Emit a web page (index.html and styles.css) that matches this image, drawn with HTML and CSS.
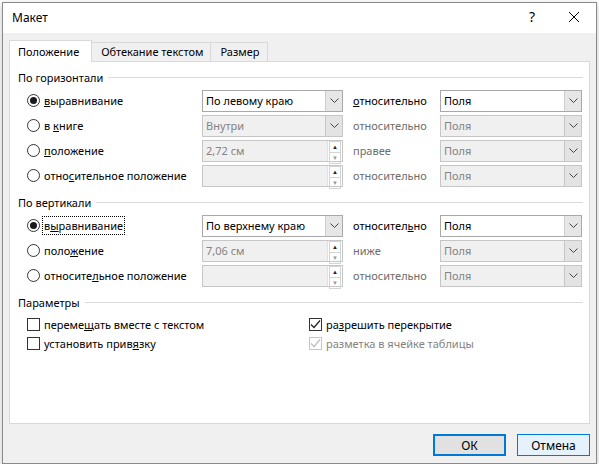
FILE: index.html
```html
<!DOCTYPE html>
<html lang="ru">
<head>
    <meta charset="UTF-8">
    <title>Макет</title>
    <link rel="stylesheet" href="styles.css">
</head>
<body>
    <div class="dialog">
        <div class="titlebar">
            <span class="title">Макет</span>
            <span class="help">?</span>
            <span class="close">
                <svg width="12" height="12" viewBox="0 0 12 12"><path d="M1 1 L11 11 M11 1 L1 11" stroke="#000" stroke-width="1" fill="none"/></svg>
            </span>
        </div>
        <div class="content">
            <div class="tabs">
                <div class="tab active">Положение</div>
                <div class="tab">Обтекание текстом</div>
                <div class="tab">Размер</div>
            </div>
            <div class="panel">
                <!-- По горизонтали -->
                <div class="group-title"><span>По горизонтали</span></div>
                <div class="rows">
                    <div class="row">
                        <label class="radio checked"><span class="circle"></span><span><u>в</u>ыравнивание</span></label>
                        <div class="combo"><span class="value">По левому краю</span><span class="arrow"><svg width="9" height="5" viewBox="0 0 9 5"><path d="M0.5 0.5 L4.5 4.5 L8.5 0.5" stroke="#444" fill="none"/></svg></span></div>
                        <span class="rel"><u>о</u>тносительно</span>
                        <div class="combo"><span class="value">Поля</span><span class="arrow"><svg width="9" height="5" viewBox="0 0 9 5"><path d="M0.5 0.5 L4.5 4.5 L8.5 0.5" stroke="#444" fill="none"/></svg></span></div>
                    </div>
                    <div class="row">
                        <label class="radio"><span class="circle"></span><span>в <u>к</u>ниге</span></label>
                        <div class="combo disabled"><span class="value">Внутри</span><span class="arrow"><svg width="9" height="5" viewBox="0 0 9 5"><path d="M0.5 0.5 L4.5 4.5 L8.5 0.5" stroke="#444" fill="none"/></svg></span></div>
                        <span class="rel disabled">относительно</span>
                        <div class="combo disabled"><span class="value">Поля</span><span class="arrow"><svg width="9" height="5" viewBox="0 0 9 5"><path d="M0.5 0.5 L4.5 4.5 L8.5 0.5" stroke="#444" fill="none"/></svg></span></div>
                    </div>
                    <div class="row">
                        <label class="radio"><span class="circle"></span><span><u>п</u>оложение</span></label>
                        <div class="spin"><span class="value">2,72 см</span><span class="spin-btns"><span class="up">&#9650;</span><span class="down">&#9660;</span></span></div>
                        <span class="rel disabled">правее</span>
                        <div class="combo disabled"><span class="value">Поля</span><span class="arrow"><svg width="9" height="5" viewBox="0 0 9 5"><path d="M0.5 0.5 L4.5 4.5 L8.5 0.5" stroke="#444" fill="none"/></svg></span></div>
                    </div>
                    <div class="row">
                        <label class="radio"><span class="circle"></span><span>отно<u>с</u>ительное положение</span></label>
                        <div class="spin"><span class="value"></span><span class="spin-btns"><span class="up">&#9650;</span><span class="down">&#9660;</span></span></div>
                        <span class="rel disabled">относительно</span>
                        <div class="combo disabled"><span class="value">Поля</span><span class="arrow"><svg width="9" height="5" viewBox="0 0 9 5"><path d="M0.5 0.5 L4.5 4.5 L8.5 0.5" stroke="#444" fill="none"/></svg></span></div>
                    </div>
                </div>

                <!-- По вертикали -->
                <div class="group-title"><span>По вертикали</span></div>
                <div class="rows">
                    <div class="row">
                        <label class="radio checked"><span class="circle"></span><span class="focus">в<u>ы</u>равнивание</span></label>
                        <div class="combo"><span class="value">По верхнему краю</span><span class="arrow"><svg width="9" height="5" viewBox="0 0 9 5"><path d="M0.5 0.5 L4.5 4.5 L8.5 0.5" stroke="#444" fill="none"/></svg></span></div>
                        <span class="rel">относител<u>ь</u>но</span>
                        <div class="combo"><span class="value">Поля</span><span class="arrow"><svg width="9" height="5" viewBox="0 0 9 5"><path d="M0.5 0.5 L4.5 4.5 L8.5 0.5" stroke="#444" fill="none"/></svg></span></div>
                    </div>
                    <div class="row">
                        <label class="radio"><span class="circle"></span><span>поло<u>ж</u>ение</span></label>
                        <div class="spin"><span class="value">7,06 см</span><span class="spin-btns"><span class="up">&#9650;</span><span class="down">&#9660;</span></span></div>
                        <span class="rel disabled">ниже</span>
                        <div class="combo disabled"><span class="value">Поля</span><span class="arrow"><svg width="9" height="5" viewBox="0 0 9 5"><path d="M0.5 0.5 L4.5 4.5 L8.5 0.5" stroke="#444" fill="none"/></svg></span></div>
                    </div>
                    <div class="row">
                        <label class="radio"><span class="circle"></span><span>относите<u>л</u>ьное положение</span></label>
                        <div class="spin"><span class="value"></span><span class="spin-btns"><span class="up">&#9650;</span><span class="down">&#9660;</span></span></div>
                        <span class="rel disabled">относительно</span>
                        <div class="combo disabled"><span class="value">Поля</span><span class="arrow"><svg width="9" height="5" viewBox="0 0 9 5"><path d="M0.5 0.5 L4.5 4.5 L8.5 0.5" stroke="#444" fill="none"/></svg></span></div>
                    </div>
                </div>

                <!-- Параметры -->
                <div class="group-title"><span>Параметры</span></div>
                <div class="checks">
                    <label class="check"><span class="box"></span><span>переме<u>щ</u>ать вместе с текстом</span></label>
                    <label class="check checked"><span class="box"><svg width="11" height="11" viewBox="0 0 11 11"><path d="M1 5.5 L4 8.5 L10 1.5" stroke="#222" stroke-width="1.2" fill="none"/></svg></span><span>ра<u>з</u>решить перекрытие</span></label>
                    <label class="check"><span class="box"></span><span>установить прив<u>я</u>зку</span></label>
                    <label class="check checked disabled"><span class="box"><svg width="11" height="11" viewBox="0 0 11 11"><path d="M1 5.5 L4 8.5 L10 1.5" stroke="#bdbdbd" stroke-width="1.2" fill="none"/></svg></span><span>разметка в ячейке таблицы</span></label>
                </div>
            </div>
            <div class="footer">
                <button class="btn default">ОК</button>
                <button class="btn hover">Отмена</button>
            </div>
        </div>
    </div>
</body>
</html>
```

FILE: styles.css
```css
/* Global */
body {
    margin: 0;
    background: #fff;
    font-family: "Noto Sans", "Open Sans", sans-serif;
    font-size: 11px;
    color: #000;
}

/* Window */
.dialog {
    margin: 2px 0 0 2px;
    width: 595px;
    height: 462px;
    box-sizing: border-box;
    border: 1px solid #8a8a8a;
    background: #f0f0f0;
    display: flex;
    flex-direction: column;
    box-shadow: 0 2px 6px rgba(0, 0, 0, 0.25);
}

.titlebar {
    height: 30px;
    background: #fff;
    display: flex;
    align-items: center;
    font-size: 12px;
}

.title {
    flex: 1;
    padding-left: 9px;
    padding-bottom: 2px;
}

.help {
    width: 20px;
    text-align: center;
    font-size: 14px;
    margin-right: 26px;
    padding-bottom: 3px;
}

.close {
    width: 12px;
    height: 12px;
    margin-right: 16px;
    margin-bottom: 3px;
    display: flex;
}

.content {
    flex: 1;
    padding: 7px 6px 0 6px;
}

/* Tabs */
.tabs {
    display: flex;
    align-items: flex-end;
    height: 21px;
    position: relative;
    z-index: 1;
}

.tab {
    height: 19px;
    line-height: 18px;
    box-sizing: border-box;
    padding: 0 7px 0 9px;
    border: 1px solid #d9d9d9;
    border-bottom: none;
    border-left: none;
    background: #f0f0f0;
}

.tab.active {
    height: 22px;
    margin-bottom: -1px;
    line-height: 21px;
    border-left: 1px solid #d9d9d9;
    background: #fff;
    padding: 0 12px 0 8px;
}

.panel {
    height: 363px;
    box-sizing: border-box;
    background: #fff;
    border: 1px solid #d9d9d9;
    padding-top: 7px;
}

/* Group headers */
.group-title {
    display: flex;
    align-items: center;
    height: 16px;
    padding-left: 8px;
    padding-right: 6px;
    margin-top: 6px;
}

.group-title:first-child {
    margin-top: 0;
}

.group-title::after {
    content: "";
    flex: 1;
    height: 1px;
    background: #dcdcdc;
    margin-left: 5px;
}

/* Rows */
.rows {
    margin-top: 3px;
    padding-left: 17px;
}

.row {
    display: grid;
    grid-template-columns: 175px 141px 97px 142px;
    align-items: center;
    height: 25px;
}

.radio,
.check {
    display: flex;
    align-items: center;
    white-space: nowrap;
}

.radio .circle {
    width: 13px;
    height: 13px;
    box-sizing: border-box;
    border: 1px solid #333;
    border-radius: 50%;
    margin-right: 4px;
    display: flex;
    align-items: center;
    justify-content: center;
}

.radio.checked .circle::after {
    content: "";
    width: 7px;
    height: 7px;
    border-radius: 50%;
    background: #1a1a1a;
}

.focus {
    outline: 1px dotted #000;
    outline-offset: 1px;
}

.rel {
    padding-left: 10px;
    white-space: nowrap;
}

.rel.disabled {
    color: #6d6d6d;
}

/* Combo boxes */
.combo,
.spin {
    height: 22px;
    box-sizing: border-box;
    border: 1px solid #a9a9a9;
    background: #fff;
    display: flex;
    align-items: stretch;
}

.combo .value,
.spin .value {
    flex: 1;
    padding-left: 3px;
    line-height: 19px;
    white-space: nowrap;
    overflow: hidden;
}

.combo .arrow {
    width: 16px;
    border-left: 1px solid #cfcfcf;
    background: #e6e6e6;
    display: flex;
    align-items: center;
    justify-content: center;
}

.combo.disabled,
.spin {
    background: #f0f0f0;
    border-color: #c6c6c6;
    color: #838383;
}

.combo.disabled .arrow {
    background: #e3e3e3;
    border-left-color: #c6c6c6;
}

.spin-btns {
    width: 14px;
    display: flex;
    flex-direction: column;
    background: #fff;
    border-left: 1px solid #e0e0e0;
}

.spin-btns span {
    flex: 1;
    font-size: 6px;
    line-height: 10px;
    text-align: center;
    border: 1px solid #d4d4d4;
    margin: 0 1px;
}

.spin-btns .up {
    color: #222;
    border-bottom: none;
}

.spin-btns .down {
    color: #9a9a9a;
}

/* Checkboxes */
.checks {
    margin-top: 5px;
    padding-left: 17px;
    display: grid;
    grid-template-columns: 282px 1fr;
    grid-auto-rows: 19px;
}

.check .box {
    width: 13px;
    height: 13px;
    box-sizing: border-box;
    border: 1px solid #333;
    margin-right: 4px;
    display: flex;
    align-items: center;
    justify-content: center;
}

.check.disabled {
    color: #838383;
}

.check.disabled .box {
    border-color: #c6c6c6;
}

/* Buttons */
.footer {
    display: flex;
    justify-content: flex-end;
    gap: 11px;
    margin-top: 10px;
}

.btn {
    width: 73px;
    height: 22px;
    box-sizing: border-box;
    font-family: inherit;
    font-size: 12px;
    color: #000;
    padding: 0;
    background: #e1e1e1;
    border: 1px solid #adadad;
}

.btn.default {
    border: 2px solid #0078d7;
}

.btn.hover {
    background: #e5f1fb;
    border: 1px solid #0078d7;
}
```
